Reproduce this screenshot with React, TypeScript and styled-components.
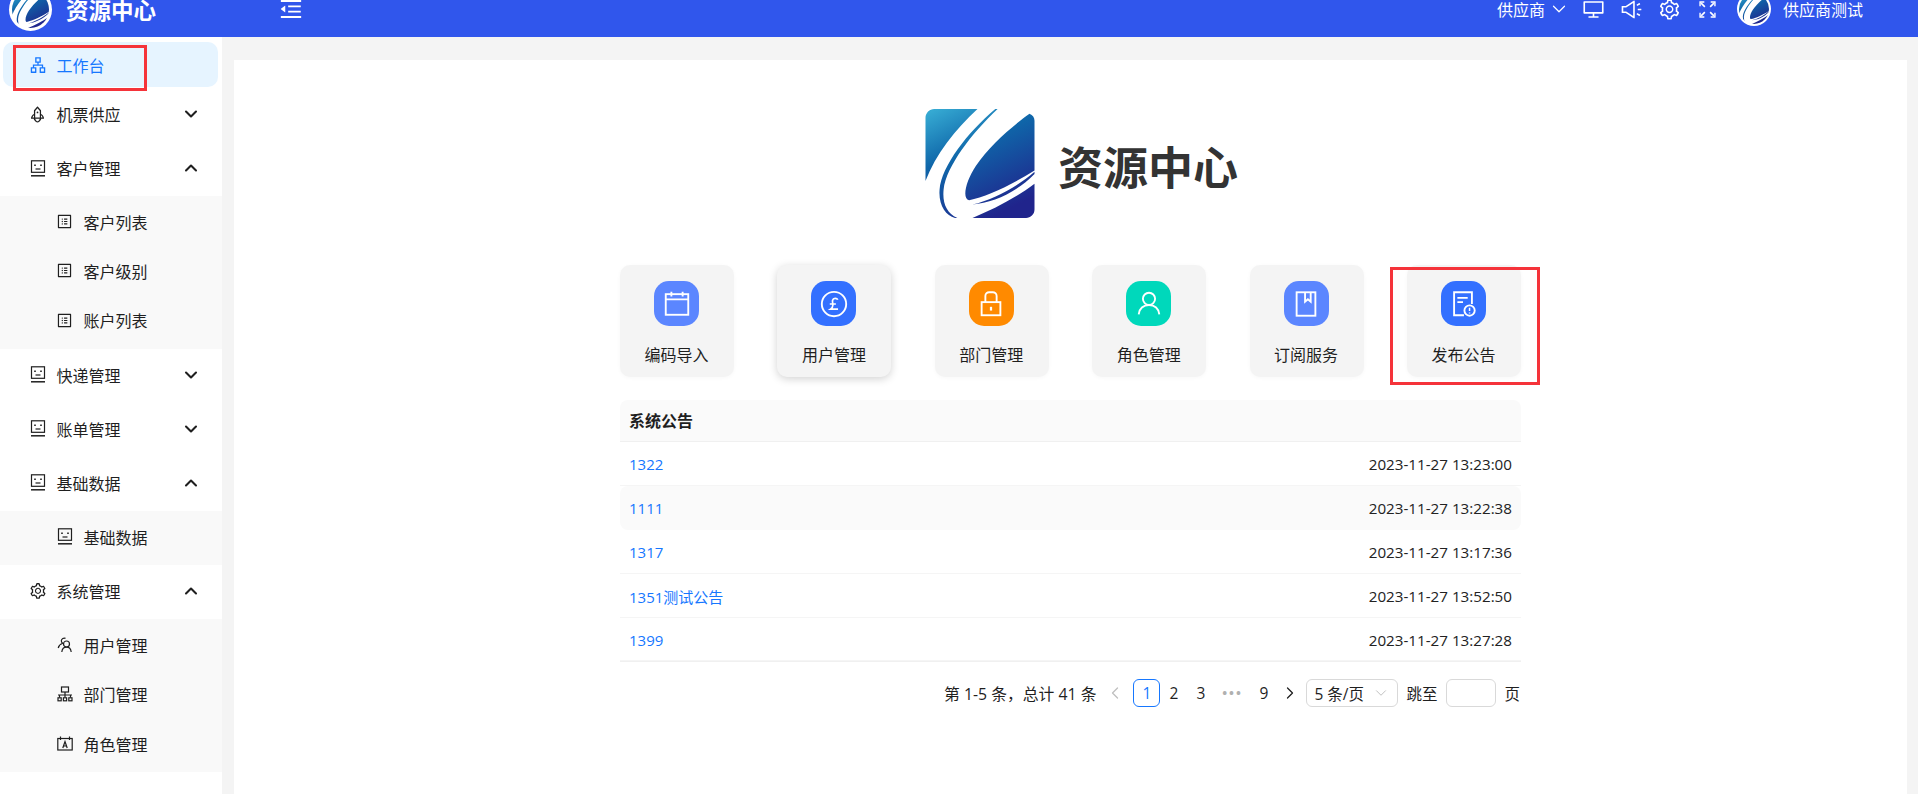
import React, { ReactNode, useId } from "react";
import styled, { createGlobalStyle } from "styled-components";
import {
  AiOutlineApartment,
  AiOutlineDesktop,
  AiOutlineMenuFold,
  AiOutlineProfile,
  AiOutlineRocket,
  AiOutlineSetting,
  AiOutlineSound,
} from "react-icons/ai";
import { ChevronDown, ChevronLeft, ChevronRight, ChevronUp } from "lucide-react";

const GlobalStyle = createGlobalStyle`
  html, body {
    margin: 0;
    height: 100%;
    overflow: hidden;
    background: #f4f4f4;
    font-family: "Open Sans", "Noto Sans CJK SC", sans-serif;
    color: #1f1f1f;
  }
  * { box-sizing: border-box; }
`;

const Page = styled.div`
  width: 1918px;
  height: 794px;
  display: flex;
  flex-direction: column;
  overflow: hidden;
`;

const Header = styled.header`
  flex: none;
  height: 37px;
  background: #3056ec;
  color: #fff;
  overflow: hidden;
`;

const HeaderRow = styled.div`
  height: 54px;
  margin-top: -18px;
  display: flex;
  align-items: center;
  padding: 0 55px 0 9px;
`;

const HeaderLogo = styled.div`
  width: 43px;
  height: 43px;
  border-radius: 50%;
  background: #fff;
  padding: 3px;
  flex: none;
`;

const LogoClip = styled.div`
  width: 100%;
  height: 100%;
  border-radius: 50%;
  overflow: hidden;
`;

const HeaderTitle = styled.div`
  margin-left: 14px;
  width: 212px;
  font-size: 22.5px;
  font-weight: 700;
`;

const HeaderRight = styled.div`
  margin-left: auto;
  display: flex;
  align-items: center;
  font-size: 16px;
`;

const RoleSelect = styled.div`
  display: flex;
  align-items: center;
  gap: 3px;
  margin-right: 14px;
`;

const HeaderIcon = styled.span`
  display: flex;
  width: 20px;
  margin-right: 18px;
  font-size: 23px;
  justify-content: center;

  svg {
    flex: none;
  }
`;

const Avatar = styled(HeaderLogo)`
  width: 34px;
  height: 34px;
  padding: 2px;
  margin: 0 12px 0 1px;
`;

const Body = styled.div`
  flex: 1;
  display: flex;
  min-height: 0;
`;

const Sidebar = styled.aside`
  flex: none;
  width: 222px;
  background: #fff;
  padding-top: 5px;
`;

const ActiveItem = styled.div`
  position: relative;
  height: 45px;
  margin: 0 4px 1px 3px;
  padding-left: 27px;
  display: flex;
  align-items: center;
  border-radius: 10px;
  background: #e6f4ff;
  color: #1677ff;
  font-size: 16px;
`;

const MenuTitle = styled.div`
  height: 54px;
  padding: 0 21px 2px 30px;
  display: flex;
  align-items: center;
  font-size: 16px;
`;

const MenuIcon = styled.span`
  display: flex;
  width: 15px;
  margin-right: 11.500px;
  justify-content: center;

  svg {
    flex: none;
  }
`;

const MenuArrow = styled.span`
  display: flex;
  margin-left: auto;
`;

const SubMenu = styled.div`
  background: #f9f9f9;
  padding: 1px 0 4px;
`;

const SubItem = styled.div`
  height: 49.330px;
  padding-left: 57px;
  display: flex;
  align-items: center;
  font-size: 16px;
`;

const RedBox = styled.div<{ $left: number; $top: number; $width: number; $height: number }>`
  position: absolute;
  left: ${(p) => p.$left}px;
  top: ${(p) => p.$top}px;
  width: ${(p) => p.$width}px;
  height: ${(p) => p.$height}px;
  border: 3px solid #f5333a;
  pointer-events: none;
`;

const Main = styled.main`
  flex: 1;
  padding: 23px 11px 0 12px;
  min-width: 0;
`;

const Panel = styled.div`
  height: 100%;
  background: #fff;
  padding-top: 49px;
`;

const Content = styled.div`
  width: 901px;
  margin: 0 auto;
`;

const Brand = styled.div`
  display: flex;
  align-items: center;
  gap: 23px;
  margin-left: 305px;
  height: 109px;
`;

const BrandLogo = styled.div`
  width: 110px;
  height: 109px;
`;

const BrandName = styled.div`
  font-size: 45px;
  font-weight: 700;
  color: #333;
  margin-top: 4px;
`;

const QuickRow = styled.div`
  display: flex;
  justify-content: space-between;
  margin-top: 47px;
`;

const QuickCard = styled.div<{ $raised?: boolean }>`
  position: relative;
  width: 114px;
  height: 112px;
  border-radius: 10px;
  background: #f4f4f4;
  display: flex;
  flex-direction: column;
  align-items: center;
  padding: 16px 1px 0 0;
  font-size: 16px;
  box-shadow: ${(p) => (p.$raised ? "0 2px 8px rgba(0, 0, 0, 0.18)" : "0 1px 4px rgba(0, 0, 0, 0.03)")};
`;

const QuickIcon = styled.div<{ $color: string }>`
  width: 45px;
  height: 45px;
  border-radius: 15px;
  background: ${(p) => p.$color};
  display: flex;
  align-items: center;
  justify-content: center;
  margin-bottom: 16px;
`;

const Table = styled.div`
  margin-top: 23px;
  font-size: 15px;
`;

const TableHead = styled.div`
  height: 42px;
  padding: 0 9px 1px;
  display: flex;
  align-items: center;
  background: #fafafa;
  border-radius: 8px 8px 0 0;
  border-bottom: 1px solid #f0f0f0;
  font-size: 16px;
  font-weight: 700;
`;

const Row = styled.div<{ $striped: boolean; $last: boolean }>`
  height: 44px;
  padding: 0 9px;
  display: flex;
  align-items: center;
  justify-content: space-between;
  background: ${(p) => (p.$striped ? "#fafafa" : "#fff")};
  border-radius: ${(p) => (p.$striped ? "8px" : "0")};
  border-bottom: ${(p) => (p.$last ? "1px solid #f0f0f0" : "none")};
  box-shadow: ${(p) => (p.$striped ? "none" : "inset 0 -1px 0 #f5f5f5")};
`;

const RowLink = styled.a`
  color: #1677ff;
`;

const RowTime = styled.span`
  color: #222;
  font-size: 15.200px;
`;

const Pagination = styled.div`
  margin: 17px 1px 0 0;
  height: 28px;
  display: flex;
  align-items: center;
  justify-content: flex-end;
  font-size: 15.500px;
`;

const Total = styled.span`
  margin-right: 5px;
  font-size: 15.800px;
`;

const PageItem = styled.span<{ $width?: number; $active?: boolean }>`
  width: ${(p) => p.$width ?? 27}px;
  height: 28px;
  display: flex;
  align-items: center;
  justify-content: center;
  border-radius: 6px;
  border: ${(p) => (p.$active ? "1px solid #1677ff" : "none")};
  color: ${(p) => (p.$active ? "#1677ff" : "inherit")};
`;

const PrevItem = styled(PageItem)`
  color: #bfbfbf;
  margin-right: 5px;
`;

const Dots = styled(PageItem)`
  color: #b0b0b0;
  font-size: 13px;
  font-weight: 700;
  letter-spacing: 2px;
`;

const SizeSelect = styled.div`
  width: 92px;
  height: 28px;
  margin: 0 8px 0 4px;
  padding: 0 7px;
  display: flex;
  align-items: center;
  justify-content: space-between;
  border: 1px solid #d9d9d9;
  border-radius: 6px;
`;

const JumpInput = styled.input`
  width: 50px;
  height: 28px;
  margin: 0 8px 0 9px;
  border: 1px solid #d9d9d9;
  border-radius: 6px;
  background: #fff;
  outline: none;
`;

const Logo: React.FC = () => {
  const id = useId();
  return (
    <svg viewBox="0 0 325 325" width="100%" height="100%" style={{ display: "block" }}>
      <defs>
        <linearGradient id={id} x1="0.1" y1="0" x2="0.6" y2="1">
          <stop offset="0" stopColor="#35a9d2" />
          <stop offset="0.4" stopColor="#0f66a9" />
          <stop offset="1" stopColor="#20248c" />
        </linearGradient>
      </defs>
      <path
        fill={`url(#${id})`}
        d="M26 0H155C90 60 30 135 0 215V26C0 12 12 0 26 0ZM310 14C320 18 325 25 325 35V183C260 225 180 262 130 272C108 268 120 215 150 170C190 110 260 50 310 14ZM325 223V300C325 315 313 325 300 325H140C200 300 270 265 325 223Z"
      />
      <path
        fill={`url(#${id})`}
        d="M208 0H215C140 70 62 170 54 240C50 280 62 310 95 325H88C60 318 38 285 42 240C48 170 125 70 208 0ZM325 187V194C270 250 200 280 140 285C200 270 270 235 325 187Z"
      />
    </svg>
  );
};

const FaceIcon: React.FC = () => (
  <svg viewBox="0 0 16 17" width="16" height="17" fill="none" stroke="currentColor" strokeWidth="1.200">
    <rect x="1.500" y="0.800" width="13" height="11.500" />
    <path d="M1 15.800h14" strokeWidth="1.500" />
    <path d="M5 4.500v1.600M11 4.500v1.600" strokeWidth="1.600" />
    <path d="M5.500 9h5" />
  </svg>
);

const UserPairIcon: React.FC = () => (
  <svg viewBox="0 0 16 16" width="16" height="16" fill="none" stroke="currentColor" strokeWidth="1.200">
    <circle cx="9.500" cy="7" r="3" />
    <path d="M4.800 15c.3-2.800 2.200-4.800 4.700-4.800s4.400 2 4.700 4.800" />
    <path d="M8.500 1.400A3 3 0 0 0 4.300 3.800c0 1.200.6 2 1.500 2.500C3.500 7 1.800 8.600 1.200 11" />
  </svg>
);

const OrgIcon: React.FC = () => (
  <svg viewBox="0 0 16 16" width="16" height="16" fill="none" stroke="currentColor" strokeWidth="1.200">
    <rect x="4.500" y="1" width="7" height="5" />
    <path d="M1 9h14M8 6v3M2.500 9v2.500M8 9v2.500M13.500 9v2.500" />
    <rect x="1" y="11.800" width="3.200" height="3" />
    <rect x="6.400" y="11.800" width="3.200" height="3" />
    <rect x="11.800" y="11.800" width="3.200" height="3" />
  </svg>
);

const RoleIcon: React.FC = () => (
  <svg viewBox="0 0 16 16" width="16" height="16" fill="none" stroke="currentColor" strokeWidth="1.200">
    <rect x="0.800" y="2.500" width="14.400" height="11.500" />
    <path d="M3.500 .5v3.500M12.500 .5v3.500" />
    <path d="M5.800 12l2.200-6.500 2.200 6.500M6.500 10h3" />
  </svg>
);

const ExpandIcon: React.FC = () => (
  <svg viewBox="0 0 16 16" width="17" height="17" fill="none" stroke="#fff" strokeWidth="1.500">
    <path d="M2 2l3.500 3.500M10.500 5.500L14 2M2 14l3.500-3.500M10.500 10.500L14 14" />
    <path d="M1 5V1h4M11 1h4v4M1 11v4h4M15 11v4h-4" strokeWidth="1.300" />
  </svg>
);

const quickGlyphs: Record<string, ReactNode> = {
  calendar: (
    <>
      <rect x="4" y="5.500" width="24" height="22" />
      <path d="M4 11h24M10 3v5M22 3v5" />
    </>
  ),
  pound: (
    <>
      <circle cx="16" cy="16" r="13" />
      <path d="M20 11.500c-.8-2-4.800-2.200-5.500.5-.4 1.500.3 3.500.3 5 0 2-1 3.500-2.500 4.500h8M11.500 16h6.500" strokeWidth="1.800" />
    </>
  ),
  lock: (
    <>
      <rect x="6" y="14" width="20" height="14" />
      <path d="M10 14V7.500C10 5 12 3.500 14 3.500h4c2 0 4 1.500 4 4V14" />
      <path d="M16 19v4" strokeWidth="2.400" />
    </>
  ),
  user: (
    <>
      <circle cx="16" cy="10.500" r="6.500" />
      <path d="M5 27c.5-6 5-10 11-10s10.500 4 11 10" />
    </>
  ),
  book: (
    <>
      <rect x="6" y="3.500" width="20" height="25" />
      <path d="M15 3.500v10l3-2.500 3 2.500v-10" />
    </>
  ),
  notice: (
    <>
      <path d="M17 28H6.500V3.500h19V16" />
      <path d="M10 9.500h11M10 14h6" />
      <circle cx="23" cy="23" r="5.500" />
      <path d="M23 20v3.500M23 25v1.200" strokeWidth="1.600" />
    </>
  ),
};

const subIcon = <AiOutlineProfile size={17} />;

type MenuGroup = {
  label: string;
  icon: ReactNode;
  open?: boolean;
  items?: { label: string; icon: ReactNode }[];
};

const menu: MenuGroup[] = [
  { label: "机票供应", icon: <AiOutlineRocket size={19} /> },
  {
    label: "客户管理",
    icon: <FaceIcon />,
    open: true,
    items: [
      { label: "客户列表", icon: subIcon },
      { label: "客户级别", icon: subIcon },
      { label: "账户列表", icon: subIcon },
    ],
  },
  { label: "快递管理", icon: <FaceIcon /> },
  { label: "账单管理", icon: <FaceIcon /> },
  {
    label: "基础数据",
    icon: <FaceIcon />,
    open: true,
    items: [{ label: "基础数据", icon: <FaceIcon /> }],
  },
  {
    label: "系统管理",
    icon: <AiOutlineSetting size={18} />,
    open: true,
    items: [
      { label: "用户管理", icon: <UserPairIcon /> },
      { label: "部门管理", icon: <OrgIcon /> },
      { label: "角色管理", icon: <RoleIcon /> },
    ],
  },
];

const quickLinks = [
  { label: "编码导入", color: "#5b86ff", glyph: "calendar" },
  { label: "用户管理", color: "#3370ff", glyph: "pound", raised: true },
  { label: "部门管理", color: "#ff8a00", glyph: "lock" },
  { label: "角色管理", color: "#00d8bb", glyph: "user" },
  { label: "订阅服务", color: "#5b86ff", glyph: "book" },
  { label: "发布公告", color: "#3370ff", glyph: "notice", marked: true },
];

const notices = [
  { title: "1322", time: "2023-11-27 13:23:00" },
  { title: "1111", time: "2023-11-27 13:22:38" },
  { title: "1317", time: "2023-11-27 13:17:36" },
  { title: "1351测试公告", time: "2023-11-27 13:52:50" },
  { title: "1399", time: "2023-11-27 13:27:28" },
];

export default function App() {
  return (
    <Page>
      <GlobalStyle />
      <Header>
        <HeaderRow>
          <HeaderLogo>
            <LogoClip>
              <Logo />
            </LogoClip>
          </HeaderLogo>
          <HeaderTitle>资源中心</HeaderTitle>
          <AiOutlineMenuFold size={26} />
          <HeaderRight>
            <RoleSelect>
              供应商
              <ChevronDown size={22} strokeWidth={1.300} />
            </RoleSelect>
            <HeaderIcon>
              <AiOutlineDesktop />
            </HeaderIcon>
            <HeaderIcon>
              <AiOutlineSound />
            </HeaderIcon>
            <HeaderIcon>
              <AiOutlineSetting />
            </HeaderIcon>
            <HeaderIcon>
              <ExpandIcon />
            </HeaderIcon>
            <Avatar>
              <LogoClip>
                <Logo />
              </LogoClip>
            </Avatar>
            <span>供应商测试</span>
          </HeaderRight>
        </HeaderRow>
      </Header>
      <Body>
        <Sidebar>
          <ActiveItem>
            <MenuIcon>
              <AiOutlineApartment size={18} />
            </MenuIcon>
            工作台
            <RedBox $left={10} $top={3} $width={134} $height={46} />
          </ActiveItem>
          {menu.map((group, index) => (
            <div key={`menu-${index}`}>
              <MenuTitle>
                <MenuIcon>{group.icon}</MenuIcon>
                {group.label}
                <MenuArrow>
                  {group.open ? (
                    <ChevronUp size={20} strokeWidth={2.500} />
                  ) : (
                    <ChevronDown size={20} strokeWidth={2.500} />
                  )}
                </MenuArrow>
              </MenuTitle>
              {group.items && (
                <SubMenu>
                  {group.items.map((item, itemIndex) => (
                    <SubItem key={`item-${itemIndex}`}>
                      <MenuIcon>{item.icon}</MenuIcon>
                      {item.label}
                    </SubItem>
                  ))}
                </SubMenu>
              )}
            </div>
          ))}
        </Sidebar>
        <Main>
          <Panel>
            <Content>
              <Brand>
                <BrandLogo>
                  <Logo />
                </BrandLogo>
                <BrandName>资源中心</BrandName>
              </Brand>
              <QuickRow>
                {quickLinks.map((link, index) => (
                  <QuickCard key={`quick-${index}`} $raised={link.raised}>
                    <QuickIcon $color={link.color}>
                      <svg viewBox="0 0 32 32" width="30" height="30" fill="none" stroke="#fff" strokeWidth="2">
                        {quickGlyphs[link.glyph]}
                      </svg>
                    </QuickIcon>
                    {link.label}
                    {link.marked && <RedBox $left={-17} $top={2} $width={150} $height={118} />}
                  </QuickCard>
                ))}
              </QuickRow>
              <Table>
                <TableHead>系统公告</TableHead>
                {notices.map((notice, index) => (
                  <Row key={`notice-${index}`} $striped={index === 1} $last={index === notices.length - 1}>
                    <RowLink>{notice.title}</RowLink>
                    <RowTime>{notice.time}</RowTime>
                  </Row>
                ))}
              </Table>
              <Pagination>
                <Total>第 1-5 条，总计 41 条</Total>
                <PrevItem>
                  <ChevronLeft size={20} strokeWidth={1.500} />
                </PrevItem>
                <PageItem $active>1</PageItem>
                <PageItem>2</PageItem>
                <PageItem>3</PageItem>
                <Dots $width={36}>•••</Dots>
                <PageItem>9</PageItem>
                <PageItem $width={25}>
                  <ChevronRight size={20} strokeWidth={1.500} />
                </PageItem>
                <SizeSelect>
                  5 条/页
                  <ChevronDown size={18} strokeWidth={1.300} color="#bfbfbf" />
                </SizeSelect>
                跳至
                <JumpInput />页
              </Pagination>
            </Content>
          </Panel>
        </Main>
      </Body>
    </Page>
  );
}
